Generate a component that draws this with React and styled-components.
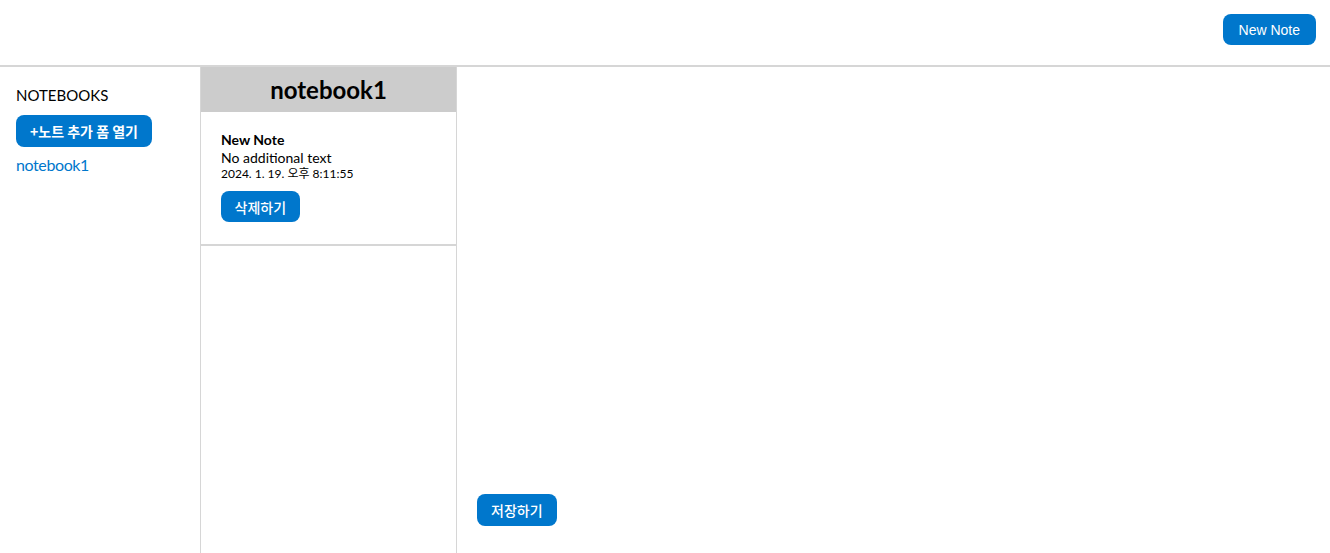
import React from "react";
import styled, { createGlobalStyle } from "styled-components";

const Global = createGlobalStyle`
  html, body { margin: 0; padding: 0; background: #fff; }
  body { font-family: Lato, "Noto Sans CJK KR", sans-serif; color: #000; }
  * { box-sizing: border-box; }
`;

const Page = styled.div`
  display: flex;
  flex-direction: column;
  height: 553px;
`;

const Header = styled.header`
  height: 67px;
  flex: none;
  display: flex;
  justify-content: flex-end;
  align-items: flex-start;
  padding: 14px 14px 0 0;
  border-bottom: 2px solid #d6d6d6;
`;

const Button = styled.button`
  border: none;
  background: #0077cc;
  color: #fff;
  border-radius: 8px;
  height: ${(p) => p.$h || 31}px;
  padding: 0 ${(p) => p.$px || 13.5}px;
  font-family: ${(p) => (p.$latin ? '"Liberation Sans", Arial, sans-serif' : '"Noto Sans CJK KR", "Noto Sans", sans-serif')};
  font-size: ${(p) => p.$fs || 14}px;
  font-weight: ${(p) => (p.$bold ? 700 : 500)};
  line-height: 1;
  cursor: pointer;
  display: inline-flex;
  align-items: center;
  justify-content: center;
  white-space: nowrap;
`;

const Body = styled.div`
  flex: 1;
  display: flex;
  min-height: 0;
`;

const Sidebar = styled.aside`
  width: 201px;
  flex: none;
  border-right: 1px solid #d6d6d6;
  padding: 18px 16px;
  display: flex;
  flex-direction: column;
  align-items: flex-start;
`;

const SideTitle = styled.div`
  font-size: 15px;
  line-height: 20px;
  margin-bottom: 10px;
`;

const NotebookLink = styled.a`
  color: #0077cc;
  font-size: 16px;
  line-height: 20px;
  letter-spacing: -0.4px;
  margin-top: 8px;
  text-decoration: none;
`;

const NoteList = styled.section`
  width: 256px;
  flex: none;
  border-right: 1px solid #d6d6d6;
  display: flex;
  flex-direction: column;
`;

const ListTitle = styled.h2`
  margin: 0;
  height: 45px;
  background: #cccccc;
  display: flex;
  align-items: center;
  justify-content: center;
  font-size: 24px;
  font-weight: 700;
`;

const NoteItem = styled.div`
  padding: 19px 20px 22px;
  border-bottom: 2px solid #d6d6d6;
  display: flex;
  flex-direction: column;
  align-items: flex-start;
`;

const NoteTitle = styled.div`
  font-size: 14px;
  font-weight: 700;
  line-height: 18px;
`;

const NoteText = styled.div`
  font-size: 14px;
  line-height: 17px;
`;

const NoteDate = styled.div`
  font-size: 12px;
  line-height: 16px;
  margin-bottom: 9px;
`;

const Editor = styled.main`
  flex: 1;
  display: flex;
  flex-direction: column;
  justify-content: flex-end;
  align-items: flex-start;
  padding: 0 20px 27px;
`;

export default function App() {
  return (
    <>
      <Global />
      <Page>
        <Header>
          <Button $latin $px={16} $h={31}>New Note</Button>
        </Header>
        <Body>
          <Sidebar>
            <SideTitle>NOTEBOOKS</SideTitle>
            <Button $bold $h={32} $px={14}>+노트 추가 폼 열기</Button>
            <NotebookLink href="#">notebook1</NotebookLink>
          </Sidebar>
          <NoteList>
            <ListTitle>notebook1</ListTitle>
            <NoteItem>
              <NoteTitle>New Note</NoteTitle>
              <NoteText>No additional text</NoteText>
              <NoteDate>2024. 1. 19. 오후 8:11:55</NoteDate>
              <Button>삭제하기</Button>
            </NoteItem>
          </NoteList>
          <Editor>
            <Button $h={32} $px={14}>저장하기</Button>
          </Editor>
        </Body>
      </Page>
    </>
  );
}
